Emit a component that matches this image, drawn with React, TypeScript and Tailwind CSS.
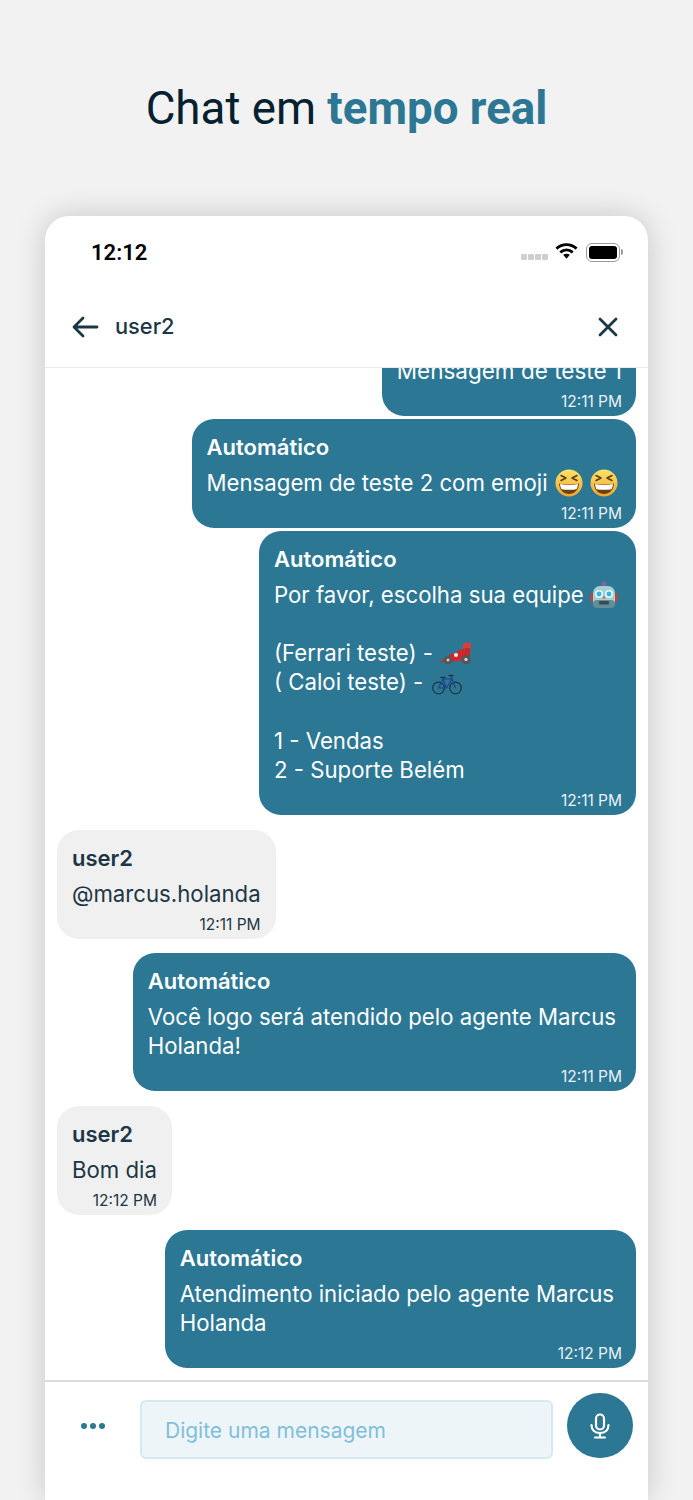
import React from "react";

function Laugh() {
  return (
    <svg width="28" height="28" viewBox="0 0 28 28" className="inline-block align-[-6px] ml-[1px]">
      <defs>
        <linearGradient id="lg" x1="0" y1="0" x2="0" y2="1">
          <stop offset="0" stopColor="#fde36a" />
          <stop offset="1" stopColor="#f2a52c" />
        </linearGradient>
      </defs>
      <circle cx="14" cy="14" r="13.5" fill="url(#lg)" />
      <path d="M6 6.500l5 2.500-5 2.500M22 6.500l-5 2.500 5 2.500" fill="none" stroke="#5b3a12" strokeWidth="1.500" strokeLinecap="round" strokeLinejoin="round" />
      <path d="M4 14.500c6 1.400 14 1.400 20 0-.3 6.500-4.800 10.500-10 10.500s-9.700-4-10-10.500z" fill="#6d3f14" />
      <path d="M5 15c5.500 1.200 12.500 1.200 18 0-.2 2.600-.8 4-1.600 5.200-4 .8-10.800.8-14.800 0-.8-1.200-1.400-2.600-1.600-5.200z" fill="#fff" />
    </svg>
  );
}

function Robot() {
  return (
    <svg width="28" height="28" viewBox="0 0 28 28" className="inline-block align-[-6px]">
      <circle cx="14" cy="2.800" r="2.400" fill="#8a5fb0" />
      <rect x="0.500" y="12" width="4" height="9" rx="1.500" fill="#c8413b" />
      <rect x="23.500" y="12" width="4" height="9" rx="1.500" fill="#c8413b" />
      <rect x="3" y="5" width="22" height="22" rx="7" fill="#a4d0d3" />
      <rect x="3" y="19" width="22" height="8" rx="4" fill="#5e8f98" />
      <circle cx="9" cy="13" r="4" fill="#e8f5f6" />
      <circle cx="19" cy="13" r="4" fill="#e8f5f6" />
      <circle cx="9" cy="13" r="2.400" fill="#35b6dd" />
      <circle cx="19" cy="13" r="2.400" fill="#35b6dd" />
      <path d="M14 14.500l1.500 3h-3z" fill="#d9534f" />
      <rect x="9" y="20" width="10" height="3.500" rx="1" fill="#3b4a50" />
    </svg>
  );
}

function Car() {
  return (
    <svg width="32" height="23" viewBox="0 0 32 23" className="inline-block align-[-4px]">
      <path d="M0.500 20l8-5 3-3 6-1 2-3 5-1 4 2v6l-3 3-8 1-8 1z" fill="#d8232a" />
      <rect x="24" y="1" width="8" height="5" rx="0.500" fill="#e53935" />
      <rect x="26" y="6" width="5" height="8" fill="#c62828" />
      <circle cx="17" cy="13" r="2" fill="#f5f5f5" />
      <circle cx="9" cy="18" r="4.200" fill="#555" />
      <circle cx="9" cy="18" r="1.500" fill="#cfcfcf" />
      <circle cx="27" cy="17.500" r="4.800" fill="#555" />
      <circle cx="27" cy="17.500" r="1.700" fill="#cfcfcf" />
    </svg>
  );
}

function Bike() {
  return (
    <svg width="30" height="21" viewBox="0 0 30 21" className="inline-block align-[-5px] ml-[3px]">
      <circle cx="6.500" cy="14" r="5.800" fill="none" stroke="#26323a" strokeWidth="1.200" />
      <circle cx="23.500" cy="14" r="5.800" fill="none" stroke="#26323a" strokeWidth="1.200" />
      <path d="M6.500 14L11 5h9l-5.500 9zM11 5l3.500 9M20 5l3.500 9M19 1.500L20 5" fill="none" stroke="#1b4590" strokeWidth="1.200" />
      <path d="M9 3.500h4M17 1.500h4" stroke="#26323a" strokeWidth="1.300" strokeLinecap="round" />
    </svg>
  );
}

function Bubble({
  me,
  name,
  time,
  bodyClass,
  children,
}: {
  me?: boolean;
  name: string;
  time: string;
  bodyClass?: string;
  children: React.ReactNode;
}) {
  return (
    <div
      className={
        me
          ? "self-end w-fit rounded-[22px] bg-[#2c7794] pl-[15px] pr-[14px] pt-[14px] pb-[4px] text-white"
          : "self-start w-fit rounded-[22px] bg-[#f0f0f0] px-[15px] pt-[14px] pb-[4px] text-[#1c3645]"
      }
    >
      <div className="text-[22px] leading-[28px] font-semibold">{name}</div>
      <div className={"text-[22.200px] leading-[29px] mt-[7px] " + (bodyClass ?? "")}>{children}</div>
      <div className={me ? "text-right text-[15.500px] leading-[20px] mt-[7px] text-[#e9f1f4]" : "text-right text-[15.500px] leading-[20px] mt-[7px] text-[#1c3645]"}>{time}</div>
    </div>
  );
}

export default function App() {
  return (
    <div className="w-[693px] h-[1500px] overflow-hidden bg-[#f2f2f2] flex flex-col items-center font-['Inter',sans-serif]">
      <h1 className="mt-[77px] h-[64px] text-[45.700px] leading-[64px] text-[#05202f] font-normal font-['Roboto',sans-serif] text-center">
        Chat em <span className="font-bold text-[#2c7794]">tempo real</span>
      </h1>
      <div className="mt-[75px] w-[603px] h-[1284px] shrink-0 rounded-t-[24px] bg-white shadow-[0_0_30px_rgba(0,0,0,0.18)] flex flex-col overflow-hidden">
        <div className="h-[72px] shrink-0 flex items-center justify-between pl-[46px] pr-[25px]">
          <span className="text-[22px] font-semibold text-black font-['Roboto',sans-serif]">12:12</span>
          <div className="flex items-center gap-[7px]">
            <div className="flex gap-[1px] mt-[10px]">
              <i className="w-[6px] h-[6px] rounded-[1px] bg-[#cfcfcf]" />
              <i className="w-[6px] h-[6px] rounded-[1px] bg-[#cfcfcf]" />
              <i className="w-[6px] h-[6px] rounded-[1px] bg-[#cfcfcf]" />
              <i className="w-[6px] h-[6px] rounded-[1px] bg-[#cfcfcf]" />
            </div>
            <svg width="23" height="18" viewBox="0 0 24 18" className="-mt-[2px]">
              <path d="M1.500 6.500C7.500 1 16.500 1 22.500 6.500" fill="none" stroke="#000" strokeWidth="3" />
              <path d="M5.500 10.500C9.500 7 14.500 7 18.500 10.500" fill="none" stroke="#000" strokeWidth="3" />
              <path d="M8.500 13L12 17l3.500-4c-2-1.500-5-1.500-7 0z" fill="#000" />
            </svg>
            <div className="flex items-center ml-[1px]">
              <div className="w-[34px] h-[19px] rounded-[6px] border-[1.500px] border-[#9a9a9a] p-[2px]">
                <div className="w-full h-full rounded-[3px] bg-black" />
              </div>
              <div className="w-[2px] h-[6px] bg-[#9a9a9a] rounded-r-[2px] ml-[1px]" />
            </div>
          </div>
        </div>
        <div className="h-[80px] shrink-0 border-b border-[#e4eef3] flex items-center justify-between pl-[27px] pr-[30px] pb-[2px]">
          <div className="flex items-center gap-[16px]">
            <svg width="27" height="22" viewBox="0 0 27 22" fill="none" stroke="#1c3645" strokeWidth="2.800" strokeLinecap="round" strokeLinejoin="round">
              <path d="M25 11H2.500M11 2L2 11l9 9" />
            </svg>
            <span className="text-[21.800px] font-medium text-[#1c3645]">user2</span>
          </div>
          <svg width="20" height="20" viewBox="0 0 20 20" fill="none" stroke="#1c3645" strokeWidth="2.800" strokeLinecap="round">
            <path d="M2 2l16 16M18 2L2 18" />
          </svg>
        </div>
        <div className="h-[1013px] shrink-0 overflow-hidden flex flex-col justify-end px-[12px] pb-[13px]">
          <div className="self-end mb-[3px] w-fit shrink-0 rounded-b-[22px] bg-[#2c7794] pl-[15px] pr-[14px] pb-[4px] text-white">
            <div className="text-[22.500px] leading-[29px]">Mensagem de teste 1</div>
            <div className="text-right text-[15.500px] leading-[20px] mt-[7px] text-[#e9f1f4]">12:11 PM</div>
          </div>
          <div className="flex flex-col shrink-0">
            <div className="flex flex-col mb-[3px]">
              <Bubble me name="Automático" time="12:11 PM" bodyClass="pr-[4px]">
                Mensagem de teste 2 com emoji <Laugh /> <Laugh />
              </Bubble>
            </div>
            <div className="flex flex-col mb-[15px]">
              <Bubble me name="Automático" time="12:11 PM" bodyClass="pr-[4px]">
                Por favor, escolha sua equipe <Robot />
                <br />
                <br />
                (Ferrari teste) - <Car />
                <br />( Caloi teste) - <Bike />
                <div className="mt-[30px]">
                  1 - Vendas
                  <br />2 - Suporte Belém
                </div>
              </Bubble>
            </div>
            <div className="flex flex-col mb-[14px]">
              <Bubble name="user2" time="12:11 PM">
                @marcus.holanda
              </Bubble>
            </div>
            <div className="flex flex-col mb-[15px]">
              <Bubble me name="Automático" time="12:11 PM" bodyClass="pr-[6px]">
                Você logo será atendido pelo agente Marcus
                <br />
                Holanda!
              </Bubble>
            </div>
            <div className="flex flex-col mb-[15px]">
              <Bubble name="user2" time="12:12 PM">
                Bom dia
              </Bubble>
            </div>
            <div className="flex flex-col">
              <Bubble me name="Automático" time="12:12 PM" bodyClass="pr-[8px]">
                Atendimento iniciado pelo agente Marcus
                <br />
                Holanda
              </Bubble>
            </div>
          </div>
        </div>
        <div className="h-[119px] shrink-0 border-t-2 border-[#dcdcdc] flex items-start pl-[36px] pr-[15px] -mt-[1px]">
          <div className="mt-[41px] flex gap-[3px] w-[24px]">
            <i className="w-[6px] h-[6px] rounded-full bg-[#2c7794]" />
            <i className="w-[6px] h-[6px] rounded-full bg-[#2c7794]" />
            <i className="w-[6px] h-[6px] rounded-full bg-[#2c7794]" />
          </div>
          <div className="ml-[35px] mt-[18px] w-[414px] h-[59px] rounded-[6px] border-2 border-[#d5e9f3] bg-[#eef5f9] flex items-center pl-[23px] pt-[2px] text-[21px] text-[#7fbfdc]">
            Digite uma mensagem
          </div>
          <div className="ml-[14px] mt-[11px] w-[66px] h-[65px] rounded-full bg-[#2c7794] flex items-center justify-center">
            <svg width="22" height="26" viewBox="0 0 22 26" fill="none" stroke="#fff" strokeWidth="2.200" strokeLinecap="round">
              <rect x="7" y="1.500" width="8" height="15" rx="4" />
              <path d="M2.500 12c0 5 3.500 8 8.500 8s8.500-3 8.500-8M11 20v4M6 24.500h10" />
            </svg>
          </div>
        </div>
      </div>
    </div>
  );
}
